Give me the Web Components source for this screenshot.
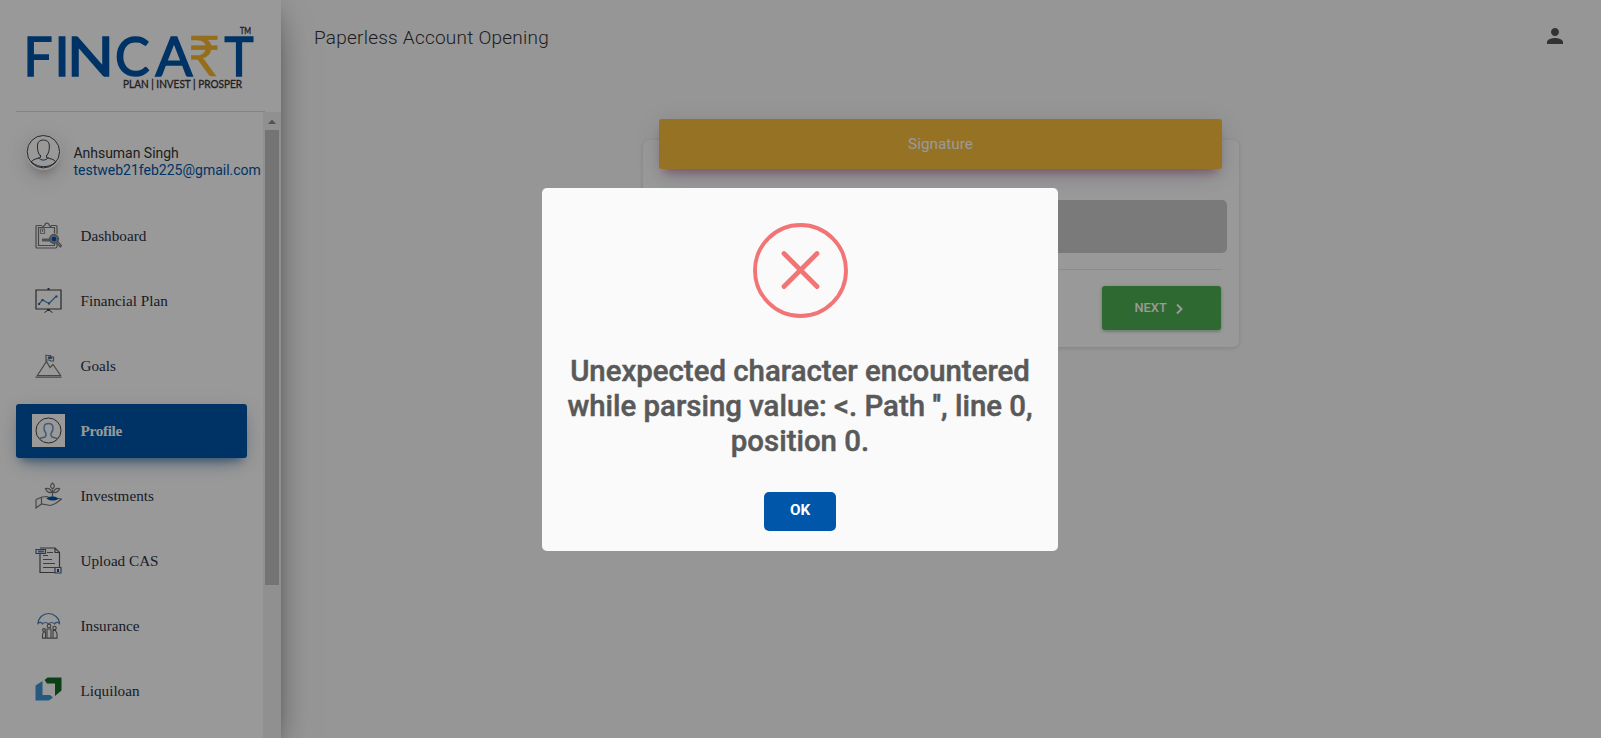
<!DOCTYPE html>
<html lang="en">
<head>
<meta charset="utf-8">
<title>Paperless Account Opening</title>
<style>
html,body{margin:0;height:100%;overflow:hidden;background:#fafafa;font-family:Roboto,sans-serif}
</style>
</head>
<body>
<account-app></account-app>
<script>
const define=(name,html)=>customElements.define(name,class extends HTMLElement{
  constructor(){super();this.attachShadow({mode:'open'}).innerHTML=html;}
});

define('brand-logo',`<style>:host{display:block;height:111px}svg{display:block}</style>
<svg width="265" height="111" font-family="Lato,sans-serif">
<g fill="#0056a9" stroke="#0056a9" stroke-width="1.6" font-size="54" font-weight="400">
<text x="23.500" y="75.500" textLength="29" lengthAdjust="spacingAndGlyphs">F</text><text x="54.500" y="75.500">I</text><text x="67" y="75.500" textLength="47" lengthAdjust="spacingAndGlyphs">N</text><text x="115" y="75.500" textLength="34.500" lengthAdjust="spacingAndGlyphs">C</text><text x="155.500" y="75.500" textLength="37" lengthAdjust="spacingAndGlyphs">A</text><text x="224.500" y="75.500" textLength="29" lengthAdjust="spacingAndGlyphs">T</text></g>
<text x="188" y="75.500" font-size="56" font-weight="400" fill="#f8b830" stroke="#f8b830" stroke-width=".5" textLength="32" lengthAdjust="spacingAndGlyphs">₹</text>
<g fill="#3a3435" font-weight="400" stroke="#3a3435" stroke-width=".35"><text x="123" y="87.500" font-size="11.300" textLength="119" lengthAdjust="spacingAndGlyphs">PLAN | INVEST | PROSPER</text><text x="240" y="33.500" font-size="9" textLength="11" lengthAdjust="spacingAndGlyphs">TM</text></g>
</svg>`);

define('user-badge',`<style>
:host{display:flex;padding:23px 0 0 25.500px;height:71px;box-sizing:border-box}
.pic{width:35px;height:35px;flex:none;border-radius:50%;background:#fff;box-shadow:0 10px 30px -12px rgba(0,0,0,.42),0 4px 25px 0 rgba(0,0,0,.12),0 8px 10px -5px rgba(0,0,0,.2)}
.pic svg{display:block}
.t{margin:10px 0 0 13px;font-size:14px;line-height:17px;white-space:nowrap}
.n{color:#333;letter-spacing:-.03px}.m{color:#0056a9}
</style><div class="pic"><svg width="35" height="35" viewBox="0 0 35 35" fill="none" stroke="#444" stroke-width="1"><circle cx="17.400" cy="16.700" r="16.200"/><path d="M14.500 21c-2.500-2-3.300-7-3-11 .4-3.500 2.500-5 5.900-5s5.500 1.500 5.900 5c.3 4-.5 9-3 11M14.500 20v2.500l-6.500 2-3 2.500M20.500 20v2.500l6.500 2 3 2.500M6 27.500c6.500 5.500 17 5.500 23 0"/><path stroke="#0056a9" d="M12.500 22.500c2 3.400 7.700 3.400 9.700 0"/></svg></div>
<div class="t"><div class="n"><slot name="name"></slot></div><div class="m"><slot name="mail"></slot></div></div>`);

define('nav-item',`<style>
:host{display:flex;align-items:center;height:54px;margin:0 0 11px 16px;width:231px;padding-left:16px;box-sizing:border-box;border-radius:3px;font:15.200px/20px "Liberation Serif",serif;color:#2b3245}
:host([active]){background:#0056a9;color:#fff;font-weight:700;letter-spacing:-.3px;box-shadow:0 12px 20px -10px rgba(0,86,169,.4),0 4px 20px 0 rgba(0,0,0,.12),0 7px 8px -5px rgba(0,86,169,.5)}
.i{width:33px;height:33px;margin-right:16px;display:grid;place-items:center;flex:none;position:relative;top:-1px}
:host([active]) .i{background:#fff}
.l{white-space:nowrap;position:relative;top:-.5px;margin-left:-.5px}
</style><div class="i"><slot name="icon"></slot></div><span class="l"><slot></slot></span>`);

define('side-bar',`<style>
:host{display:block;width:281px;height:738px;background:#fff;box-sizing:border-box;box-shadow:0 16px 38px -12px rgba(0,0,0,.56),0 4px 25px 0 rgba(0,0,0,.12),0 8px 10px -5px rgba(0,0,0,.2);overflow:visible}
.line{height:1px;margin:0 16px 0 16px;background:#ddd}
.body{display:flex;height:626px;overflow:hidden}
.list{width:263px;flex:none;overflow:hidden}
.nav{padding-top:26px}
.bar{width:18px;background:#f1f1f1;display:flex;flex-direction:column;align-items:center}
.bar svg{display:block;flex:none}
.thumb{width:14px;height:455px;background:#c1c1c1}
svg{display:block}
</style>
<brand-logo></brand-logo><div class="line"></div>
<div class="body"><div class="list">
<user-badge><span slot="name">Anhsuman Singh</span><span slot="mail">testweb21feb225@gmail.com</span></user-badge>
<div class="nav">
<nav-item><svg slot="icon" width="27" height="27" viewBox="0 0 27 27" fill="none" stroke="#777" stroke-width="1.200"><path d="M7 3.500H2q-1 0-1 1V25q0 1 1 1h18.500q1.500 0 1.500-1.500V22M16 3.500h5q1 0 1 1V12"/><path d="M7 5.500H3.500v18h16V22M16 5.500h3.500v6"/><path d="M7 5.500h9.500L14 3c0-2.500-4-2.500-4 0z"/><path stroke="#999" d="M5.500 7v4.500h4V7zM7.500 7v3"/><path stroke="#888" stroke-width="3" d="M7 18h8"/><circle cx="19" cy="17" r="4.500" fill="#8aa0b4"/><circle cx="19" cy="17" r="1.700" fill="#0056a9" stroke="#0056a9"/><path d="M21.500 21l4 4 1-1.500-3.500-3.500"/></svg>Dashboard</nav-item>
<nav-item><svg slot="icon" width="27" height="27" viewBox="0 0 27 27" fill="none" stroke="#444"><path stroke-width="1.200" d="M1 3h25v19H1z"/><path stroke-width="2" d="M12.500 2h2M12 23h3"/><path d="M9.500 25.500l3-2h2l3 2"/><path stroke="#4b82bd" stroke-width="1.200" d="M4 17l3.500-4 6.500 3.500L21.500 9"/><path stroke="#2c68a8" stroke-width="2" d="M3 17h2M6.500 13h2M13 16.500h2M20.500 9.500h2"/></svg>Financial Plan</nav-item>
<nav-item><svg slot="icon" width="27" height="27" viewBox="0 0 27 27" fill="none" stroke="#777" stroke-width="1.200"><path d="M.5 25.200h26M2 24L11.500 9.500 15 15.500l3-3L26 24M11 9.500V2.500M2 23.500h24"/><path d="M11.500 3.500h4v1.500h3v4h-3l-1-1h-3"/><path fill="#0056a9" stroke="#4879ad" d="M13.500 5h3v1.500h-3z"/></svg>Goals</nav-item>
<nav-item active><svg slot="icon" width="27" height="27" viewBox="0 0 27 27" fill="none" stroke="#444"><circle cx="13.500" cy="13.500" r="12.500"/><path stroke="#6d9aca" stroke-width="1.500" d="M4.500 21.500l5.500-1.500 1-1.500V16.500C8 12.500 8 6.500 13.500 6.500s5.500 6 2.500 10v2l1 1.500 5.500 1.500"/></svg>Profile</nav-item>
<nav-item><svg slot="icon" width="27" height="27" viewBox="0 0 27 27" fill="none" stroke="#777" stroke-width="1.200"><path d="M17.500 14V8M17.500 7c-2.500-2-2.500-4 0-6 2.500 2 2.500 4 0 6zM16.500 10.500c-3.500.5-5-1-6-4 3.500-.5 5.500 1 6 4zM18.500 10.500c3.500.5 5-1 6-4-3.500-.5-5.500 1-6 4z"/><path d="M1 17.500l6-2.500 5-.5 4 2M1 17.500v8.500l5.500-4 9 1.500 5-2L26.500 17l-5-.5M6.500 15.500v6"/><path fill="#0056a9" stroke="#0056a9" d="M12.500 16.500c3-2 7-2 10 0-2 2-7 2-10 0z"/></svg>Investments</nav-item>
<nav-item><svg slot="icon" width="27" height="27" viewBox="0 0 27 27" fill="none" stroke="#555" stroke-width="1.200"><path d="M5 1h15l4.500 4.500V21M5 7v18.500h15M20 1v4.500h4.500"/><path stroke="#666" d="M12 5.500h6M8 8.500h5M8 12.500h9M8 16.500h12M8 20.500h12"/><path stroke="#4b6580" d="M1 2.500h9.500v4H1zM20 20.500h6v5.500h-6z"/><path stroke="#4b82bd" stroke-width="2" d="M3 4.500h6"/><path stroke="#0056a9" stroke-width="2" d="M23 22v3"/></svg>Upload CAS</nav-item>
<nav-item><svg slot="icon" width="27" height="27" viewBox="0 0 27 27" fill="none" stroke="#4b82bd"><path stroke-width="1.200" d="M3 11.500C3 6 8 1.500 13.500 1.500S24.500 6 24.500 11.500c-2-2-4-1-5 .5-1.500-2-4-2-6 0-2-2-4.500-2-6 0-1-1.500-2.500-2.500-4.500-.5z"/><g stroke="#666" stroke-width="1.100"><circle cx="14" cy="14" r="1.800"/><circle cx="9" cy="18" r="1.400"/><circle cx="19.500" cy="16" r="1.700"/><path d="M7.500 26v-3.500l1-2.500h2v6zM12 26V17h4v9zM18 26v-7.500h2.500l1.500 3V26zM7 26.300h15.500"/></g></svg>Insurance</nav-item>
<nav-item><svg slot="icon" width="27" height="27" viewBox="0 0 27 27"><path fill="#3e95d4" d="M.5 8.500L7.500 4v14H15l3 2.500-4 3H.5z"/><path fill="#166c27" d="M9.500 3l3-2.500h14v13L20 19V6.500h-8z"/></svg>Liquiloan</nav-item>
</div></div>
<div class="bar"><svg width="14" height="18"><path d="M3 12l4-4.500 4 4.500z" fill="#8a8a8a"/></svg><div class="thumb"></div></div>
</div>`);

define('page-header',`<style>
:host{display:flex;justify-content:space-between;align-items:center;height:74px;padding:0 34px 0 33px;box-sizing:border-box}
h1{margin:0;font-size:19px;font-weight:300;line-height:24px;color:#333;white-space:nowrap;letter-spacing:.23px;position:relative;top:1px}
svg{display:block;position:relative;top:-1px}
</style><h1><slot></slot></h1><svg width="24" height="24" viewBox="0 0 24 24" fill="#555"><path d="M12 12c2.210 0 4-1.790 4-4s-1.790-4-4-4-4 1.790-4 4 1.790 4 4 4zm0 2c-2.670 0-8 1.340-8 4v2h16v-2c0-2.660-5.330-4-8-4z"/></svg>`);

define('signature-card',`<style>
:host{display:flex;flex-direction:column;width:596px;height:207px;margin:66px 0 0 362px;box-sizing:border-box;background:#fff;border-radius:6px;box-shadow:0 1px 4px rgba(0,0,0,.14);padding:0 16px}
.head{flex:none;height:50px;width:563px;margin-top:-21px;border-radius:3px;background:#fbc03d;color:#fff;display:grid;place-items:center;font-size:15.300px;box-shadow:0 16px 26px -10px rgba(156,39,176,.08),0 4px 25px 0 rgba(0,0,0,.12),0 8px 10px -5px rgba(156,39,100,.45)}
.field{height:53px;margin:31px -4px 0;background:#cbcbcb;border-radius:5px;flex:none}
.rule{height:1px;margin:16px 1px 0 0;background:#eaeaea;flex:none}
.btn{margin:16px 2px 0 auto;width:119px;height:44px;flex:none;border-radius:3px;background:#4caf50;color:#fff;display:flex;align-items:center;padding-left:32.500px;padding-bottom:1px;box-sizing:border-box;font-size:12.800px;font-weight:500;box-shadow:0 2px 2px rgba(76,175,80,.2),0 1px 4px rgba(0,0,0,.2)}
.btn svg{margin-left:7px;position:relative;top:1px}
</style><div class="head"><slot></slot></div><div class="field"></div><div class="rule"></div><div class="btn"><span>NEXT</span><svg width="12" height="14" fill="none" stroke="#fff" stroke-width="2"><path d="M3 2.500L7.500 7 3 11.500"/></svg></div>`);

define('alert-dialog',`<style>
:host{position:fixed;inset:0;background:rgba(0,0,0,.4);display:flex;align-items:flex-start;justify-content:center;z-index:5}
.box{width:516px;height:363px;margin:188px 1px 0 0;background:#fafafa;border-radius:5px;display:flex;flex-direction:column;align-items:center;box-sizing:border-box;padding-top:35px}
.box>svg{flex:none;display:block}
h2{margin:36px 0 0;font-size:29.400px;font-weight:500;line-height:34.850px;color:#595959;text-align:center;white-space:nowrap;-webkit-text-stroke:.5px #595959}
.ok{margin-top:33.500px;width:72px;height:39px;background:#0056a9;color:#fff;border-radius:5px;display:grid;place-items:center;font-size:15.300px;line-height:20px;font-weight:700;letter-spacing:-.2px;padding-bottom:3px;box-sizing:border-box}
</style><div class="box"><svg width="95" height="95" fill="none" stroke="#f27474" stroke-width="3.900"><circle cx="47.500" cy="47.500" r="45.500"/><path stroke-width="4.800" stroke-linecap="round" d="M31 30.500l33 33M64 30.500L31 63.500"/></svg><h2><slot></slot></h2><div class="ok">OK</div></div>`);

define('account-app',`<style>
:host{display:flex;width:1601px;height:738px;background:#fafafa}
side-bar{flex:none;z-index:1}
main{flex:1;min-width:0}
</style><side-bar></side-bar><main><page-header>Paperless Account Opening</page-header><signature-card>Signature</signature-card></main>
<alert-dialog>Unexpected character encountered<br>while parsing value: &lt;. Path '', line 0,<br>position 0.</alert-dialog>`);
</script>
</body>
</html>
